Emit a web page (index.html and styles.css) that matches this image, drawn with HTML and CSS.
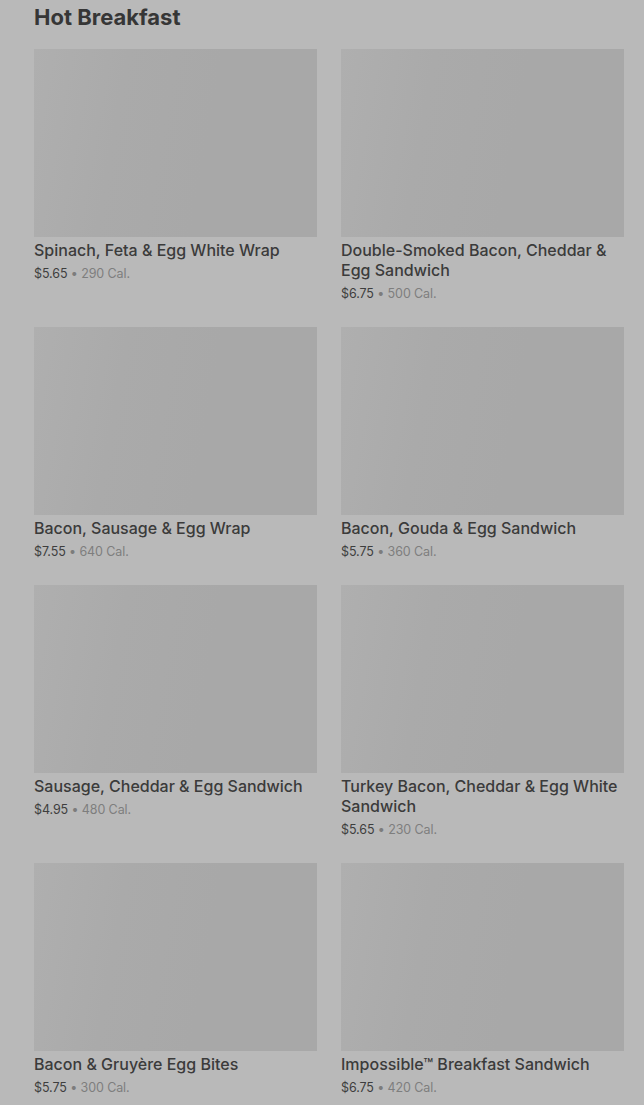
FILE: index.html
```html
<!DOCTYPE html>
<html lang="en">
<head>
<meta charset="utf-8">
<link rel="stylesheet" href="styles.css">
</head>
<body>
<main class="section">
  <h2 class="section-title">Hot Breakfast</h2>
  <div class="grid">
    <div class="item"><div class="thumb"></div><div class="name">Spinach, Feta &amp; Egg White Wrap</div><div class="meta"><span class="price">$5.65</span> • <span class="cal">290 Cal.</span></div></div>
    <div class="item"><div class="thumb"></div><div class="name">Double-Smoked Bacon, Cheddar &amp; Egg Sandwich</div><div class="meta"><span class="price">$6.75</span> • <span class="cal">500 Cal.</span></div></div>
    <div class="item"><div class="thumb"></div><div class="name">Bacon, Sausage &amp; Egg Wrap</div><div class="meta"><span class="price">$7.55</span> • <span class="cal">640 Cal.</span></div></div>
    <div class="item"><div class="thumb"></div><div class="name">Bacon, Gouda &amp; Egg Sandwich</div><div class="meta"><span class="price">$5.75</span> • <span class="cal">360 Cal.</span></div></div>
    <div class="item"><div class="thumb"></div><div class="name">Sausage, Cheddar &amp; Egg Sandwich</div><div class="meta"><span class="price">$4.95</span> • <span class="cal">480 Cal.</span></div></div>
    <div class="item"><div class="thumb"></div><div class="name">Turkey Bacon, Cheddar &amp; Egg White Sandwich</div><div class="meta"><span class="price">$5.65</span> • <span class="cal">230 Cal.</span></div></div>
    <div class="item"><div class="thumb"></div><div class="name">Bacon &amp; Gruyère Egg Bites</div><div class="meta"><span class="price">$5.75</span> • <span class="cal">300 Cal.</span></div></div>
    <div class="item"><div class="thumb"></div><div class="name">Impossible™ Breakfast Sandwich</div><div class="meta"><span class="price">$6.75</span> • <span class="cal">420 Cal.</span></div></div>
  </div>
</main>
</body>
</html>
```

FILE: styles.css
```css
* { box-sizing: border-box; }
html, body { margin: 0; padding: 0; }
body {
  background: #b9b9b9;
  font-family: Inter, "Noto Sans", sans-serif;
  color: #3a3a3a;
  height: 1105px;
  overflow: hidden;
}
.section {
  padding: 0 20px 0 34px;
}
.section-title {
  margin: 0;
  font-size: 22px;
  font-weight: 700;
  line-height: 34px;
  letter-spacing: 0;
  color: #363636;
  height: 49px;
}
.grid {
  display: grid;
  grid-template-columns: 283px 283px;
  column-gap: 24px;
  row-gap: 23px;
}
.thumb {
  height: 188px;
  background: linear-gradient(100deg, #afafaf 0%, #aaaaaa 30%, #a8a8a8 60%, #a8a8a8 100%);
}
.name {
  margin-top: 3px;
  font-size: 16px;
  font-weight: 500;
  line-height: 20px;
  color: #3b3b3b;
}
.meta {
  margin-top: 4px;
  font-size: 12.5px;
  line-height: 20px;
  letter-spacing: -0.1px;
  color: #7c7c7c;
}
.price { color: #3e3e3e; }
.cal { color: #7e7e7e; }
```
